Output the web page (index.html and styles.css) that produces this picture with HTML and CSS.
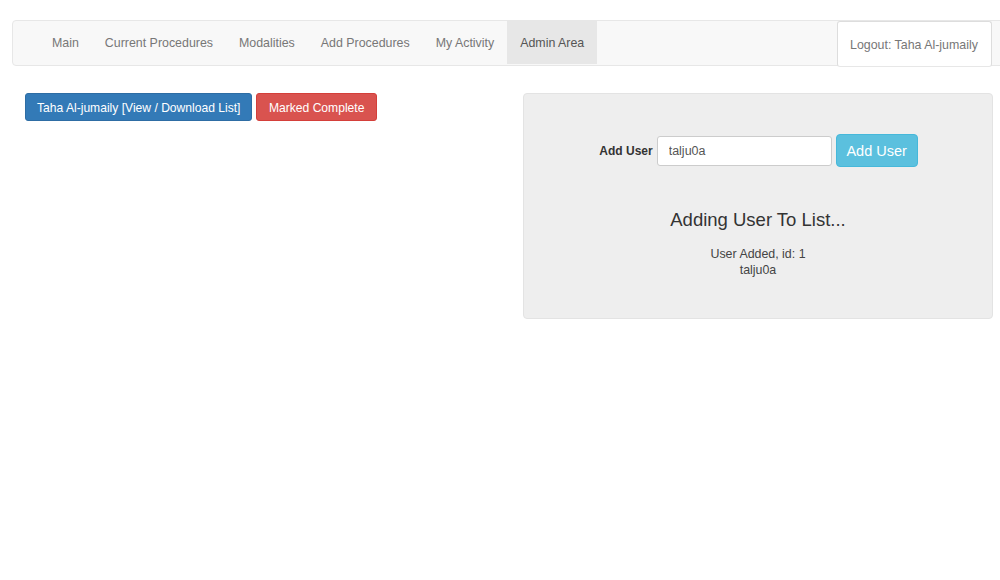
FILE: index.html
```html
<!DOCTYPE html>
<html>
<head>
<meta charset="utf-8">
<link rel="stylesheet" href="styles.css">
</head>
<body>
<nav class="navbar">
  <ul class="nav">
    <li><a>Main</a></li>
    <li><a>Current Procedures</a></li>
    <li><a>Modalities</a></li>
    <li><a>Add Procedures</a></li>
    <li><a>My Activity</a></li>
    <li class="active"><a>Admin Area</a></li>
  </ul>
  <div class="logout">Logout: Taha Al-jumaily</div>
</nav>
<main class="content">
  <div class="left">
    <button class="btn btn-primary">Taha Al-jumaily [View / Download List]</button>
    <button class="btn btn-danger">Marked Complete</button>
  </div>
  <section class="well">
    <form class="add-form">
      <label class="add-label">Add User</label>
      <input class="add-input" type="text" value="talju0a">
      <button class="btn-info" type="button">Add User</button>
    </form>
    <h3 class="status">Adding User To List...</h3>
    <p class="result">User Added, id: 1<br>talju0a</p>
  </section>
</main>
</body>
</html>
```

FILE: styles.css
```css
html { overflow: hidden; }
body {
  margin: 0;
  font-family: "Liberation Sans", Arial, sans-serif;
  font-size: 13px;
  color: #333;
  background: #fff;
}
.navbar {
  margin: 20px -20px 0 12px;
  height: 44px;
  border: 1px solid #e7e7e7;
  border-radius: 4px;
  background: #f8f8f8;
  display: flex;
  align-items: stretch;
}
.nav {
  list-style: none;
  margin: 0;
  padding: 0 0 0 26px;
  display: flex;
  flex: 1;
}
.nav li a {
  display: flex;
  align-items: center;
  height: 43px;
  padding: 1px 13px 0;
  box-sizing: border-box;
  font-size: 12.4px;
  color: #777;
}
.nav li.active a {
  background: #e7e7e7;
  color: #555;
}
.logout {
  width: 129px;
  padding: 1px 12px 0;
  margin-right: 27px;
  height: 43px;
  box-sizing: content-box;
  display: flex;
  align-items: center;
  background: #fff;
  border: 1px solid #ddd;
  border-bottom-color: #e7e7e7;
  border-radius: 3px;
  font-size: 12.4px;
  color: #777;
  white-space: nowrap;
}
.content {
  display: flex;
  padding: 27px 7px 0 25px;
}
.left {
  flex: 1;
  display: flex;
  align-items: flex-start;
  gap: 4px;
}
.btn {
  height: 28px;
  padding: 1px 11px 0;
  border: 1px solid transparent;
  border-radius: 3px;
  font-family: "Liberation Sans", Arial, sans-serif;
  font-size: 12.1px;
  color: #fff;
}
.btn-primary { background: #337ab7; border-color: #2e6da4; }
.btn-danger { background: #d9534f; border-color: #d43f3a; padding: 1px 11.5px 0; }
.well {
  width: 470px;
  height: 226px;
  box-sizing: border-box;
  background: #eee;
  border: 1px solid #e3e3e3;
  border-radius: 4px;
  padding-top: 40px;
  text-align: center;
}
.add-form {
  display: flex;
  align-items: center;
  justify-content: center;
  margin-left: 1px;
}
.add-label {
  font-weight: bold;
  font-size: 12px;
  margin-right: 4px;
  color: #333;
}
.add-input {
  width: 175px;
  height: 30px;
  box-sizing: border-box;
  border: 1px solid #ccc;
  border-radius: 3px;
  padding: 0 11px;
  font-family: "Liberation Sans", Arial, sans-serif;
  font-size: 12.5px;
  color: #555;
  background: #fff;
  margin-right: 4px;
}
.btn-info {
  width: 82px;
  height: 33px;
  border: 1px solid #46b8da;
  background: #5bc0de;
  border-radius: 4px;
  color: #fff;
  font-family: "Liberation Sans", Arial, sans-serif;
  font-size: 14.5px;
}
.status {
  margin: 41px 0 0;
  font-weight: normal;
  font-size: 18.5px;
  color: #333;
  line-height: 24px;
}
.result {
  margin: 14px 0 0;
  font-size: 12.4px;
  line-height: 16px;
  color: #444;
}
```
